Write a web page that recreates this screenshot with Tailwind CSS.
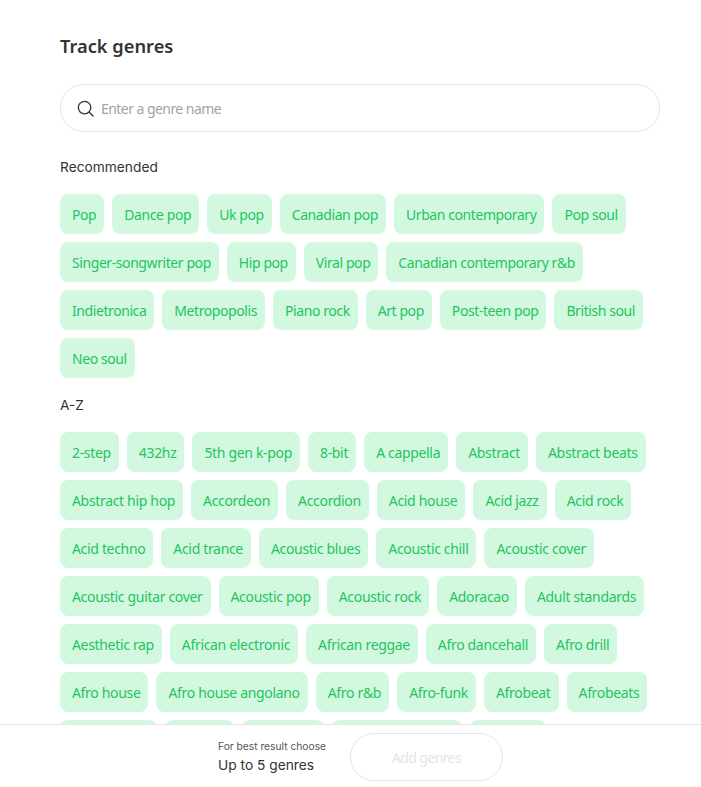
<!DOCTYPE html>
<html lang="en">
<head>
<meta charset="UTF-8">
<title>Track genres</title>
<script src="https://cdn.jsdelivr.net/npm/@tailwindcss/browser@4"></script>
</head>
<body class="bg-white font-['Noto_Sans',sans-serif]">
<div class="h-[787px] flex flex-col overflow-hidden">
  <main class="flex-1 min-h-0 overflow-hidden pl-[60px] pr-[41px] pt-[32px]">
    <h1 class="text-[18.25px] leading-[28px] font-semibold text-[#333]">Track genres</h1>
    <div class="mt-[24px] h-[48px] flex items-center rounded-full border border-[#e5e5e5] pl-[16px]">
      <svg class="w-[17px] h-[17px] text-[#333]" viewBox="0 0 18 18" fill="none" stroke="currentColor" stroke-width="1.4" stroke-linecap="round"><circle cx="8" cy="8" r="6.6"/><path d="M13 13l4 4"/></svg>
      <span class="ml-[7px] text-[14px] tracking-[-0.55px] text-[#a3a3a3]">Enter a genre name</span>
    </div>
    <h2 class="mt-[25px] text-[13.75px] leading-[20px] font-['Inter',sans-serif] text-[#333]">Recommended</h2>
    <div class="mt-[17px] flex flex-wrap gap-[8px] text-[14px] tracking-[-0.42px] text-[#22c55e]">
      <span class="h-[40px] pl-[12px] pr-[8px] flex items-center rounded-[8px] bg-[#d3f8e0]">Pop</span>
      <span class="h-[40px] pl-[12px] pr-[8px] flex items-center rounded-[8px] bg-[#d3f8e0]">Dance pop</span>
      <span class="h-[40px] pl-[12px] pr-[8px] flex items-center rounded-[8px] bg-[#d3f8e0]">Uk pop</span>
      <span class="h-[40px] pl-[12px] pr-[8px] flex items-center rounded-[8px] bg-[#d3f8e0]">Canadian pop</span>
      <span class="h-[40px] pl-[12px] pr-[8px] flex items-center rounded-[8px] bg-[#d3f8e0]">Urban contemporary</span>
      <span class="h-[40px] pl-[12px] pr-[8px] flex items-center rounded-[8px] bg-[#d3f8e0]">Pop soul</span>
      <span class="h-[40px] pl-[12px] pr-[8px] flex items-center rounded-[8px] bg-[#d3f8e0]">Singer-songwriter pop</span>
      <span class="h-[40px] pl-[12px] pr-[8px] flex items-center rounded-[8px] bg-[#d3f8e0]">Hip pop</span>
      <span class="h-[40px] pl-[12px] pr-[8px] flex items-center rounded-[8px] bg-[#d3f8e0]">Viral pop</span>
      <span class="h-[40px] pl-[12px] pr-[8px] flex items-center rounded-[8px] bg-[#d3f8e0]">Canadian contemporary r&amp;b</span>
      <span class="h-[40px] pl-[12px] pr-[8px] flex items-center rounded-[8px] bg-[#d3f8e0]">Indietronica</span>
      <span class="h-[40px] pl-[12px] pr-[8px] flex items-center rounded-[8px] bg-[#d3f8e0]">Metropopolis</span>
      <span class="h-[40px] pl-[12px] pr-[8px] flex items-center rounded-[8px] bg-[#d3f8e0]">Piano rock</span>
      <span class="h-[40px] pl-[12px] pr-[8px] flex items-center rounded-[8px] bg-[#d3f8e0]">Art pop</span>
      <span class="h-[40px] pl-[12px] pr-[8px] flex items-center rounded-[8px] bg-[#d3f8e0]">Post-teen pop</span>
      <span class="h-[40px] pl-[12px] pr-[8px] flex items-center rounded-[8px] bg-[#d3f8e0]">British soul</span>
      <span class="h-[40px] pl-[12px] pr-[8px] flex items-center rounded-[8px] bg-[#d3f8e0]">Neo soul</span>
    </div>
    <h2 class="mt-[17px] text-[13.75px] leading-[20px] font-['Inter',sans-serif] text-[#333]">A-Z</h2>
    <div class="mt-[17px] flex flex-wrap gap-[8px] text-[14px] tracking-[-0.33px] text-[#22c55e]">
      <span class="h-[40px] pl-[12px] pr-[8px] flex items-center rounded-[8px] bg-[#d3f8e0]">2-step</span>
      <span class="h-[40px] pl-[12px] pr-[8px] flex items-center rounded-[8px] bg-[#d3f8e0]">432hz</span>
      <span class="h-[40px] pl-[12px] pr-[8px] flex items-center rounded-[8px] bg-[#d3f8e0]">5th gen k-pop</span>
      <span class="h-[40px] pl-[12px] pr-[8px] flex items-center rounded-[8px] bg-[#d3f8e0]">8-bit</span>
      <span class="h-[40px] pl-[12px] pr-[8px] flex items-center rounded-[8px] bg-[#d3f8e0]">A cappella</span>
      <span class="h-[40px] pl-[12px] pr-[8px] flex items-center rounded-[8px] bg-[#d3f8e0]">Abstract</span>
      <span class="h-[40px] pl-[12px] pr-[8px] flex items-center rounded-[8px] bg-[#d3f8e0]">Abstract beats</span>
      <span class="h-[40px] pl-[12px] pr-[8px] flex items-center rounded-[8px] bg-[#d3f8e0]">Abstract hip hop</span>
      <span class="h-[40px] pl-[12px] pr-[8px] flex items-center rounded-[8px] bg-[#d3f8e0]">Accordeon</span>
      <span class="h-[40px] pl-[12px] pr-[8px] flex items-center rounded-[8px] bg-[#d3f8e0]">Accordion</span>
      <span class="h-[40px] pl-[12px] pr-[8px] flex items-center rounded-[8px] bg-[#d3f8e0]">Acid house</span>
      <span class="h-[40px] pl-[12px] pr-[8px] flex items-center rounded-[8px] bg-[#d3f8e0]">Acid jazz</span>
      <span class="h-[40px] pl-[12px] pr-[8px] flex items-center rounded-[8px] bg-[#d3f8e0]">Acid rock</span>
      <span class="h-[40px] pl-[12px] pr-[8px] flex items-center rounded-[8px] bg-[#d3f8e0]">Acid techno</span>
      <span class="h-[40px] pl-[12px] pr-[8px] flex items-center rounded-[8px] bg-[#d3f8e0]">Acid trance</span>
      <span class="h-[40px] pl-[12px] pr-[8px] flex items-center rounded-[8px] bg-[#d3f8e0]">Acoustic blues</span>
      <span class="h-[40px] pl-[12px] pr-[8px] flex items-center rounded-[8px] bg-[#d3f8e0]">Acoustic chill</span>
      <span class="h-[40px] pl-[12px] pr-[8px] flex items-center rounded-[8px] bg-[#d3f8e0]">Acoustic cover</span>
      <span class="h-[40px] pl-[12px] pr-[8px] flex items-center rounded-[8px] bg-[#d3f8e0]">Acoustic guitar cover</span>
      <span class="h-[40px] pl-[12px] pr-[8px] flex items-center rounded-[8px] bg-[#d3f8e0]">Acoustic pop</span>
      <span class="h-[40px] pl-[12px] pr-[8px] flex items-center rounded-[8px] bg-[#d3f8e0]">Acoustic rock</span>
      <span class="h-[40px] pl-[12px] pr-[8px] flex items-center rounded-[8px] bg-[#d3f8e0]">Adoracao</span>
      <span class="h-[40px] pl-[12px] pr-[8px] flex items-center rounded-[8px] bg-[#d3f8e0]">Adult standards</span>
      <span class="h-[40px] pl-[12px] pr-[8px] flex items-center rounded-[8px] bg-[#d3f8e0]">Aesthetic rap</span>
      <span class="h-[40px] pl-[12px] pr-[8px] flex items-center rounded-[8px] bg-[#d3f8e0]">African electronic</span>
      <span class="h-[40px] pl-[12px] pr-[8px] flex items-center rounded-[8px] bg-[#d3f8e0]">African reggae</span>
      <span class="h-[40px] pl-[12px] pr-[8px] flex items-center rounded-[8px] bg-[#d3f8e0]">Afro dancehall</span>
      <span class="h-[40px] pl-[12px] pr-[8px] flex items-center rounded-[8px] bg-[#d3f8e0]">Afro drill</span>
      <span class="h-[40px] pl-[12px] pr-[8px] flex items-center rounded-[8px] bg-[#d3f8e0]">Afro house</span>
      <span class="h-[40px] pl-[12px] pr-[8px] flex items-center rounded-[8px] bg-[#d3f8e0]">Afro house angolano</span>
      <span class="h-[40px] pl-[12px] pr-[8px] flex items-center rounded-[8px] bg-[#d3f8e0]">Afro r&amp;b</span>
      <span class="h-[40px] pl-[12px] pr-[8px] flex items-center rounded-[8px] bg-[#d3f8e0]">Afro-funk</span>
      <span class="h-[40px] pl-[12px] pr-[8px] flex items-center rounded-[8px] bg-[#d3f8e0]">Afrobeat</span>
      <span class="h-[40px] pl-[12px] pr-[8px] flex items-center rounded-[8px] bg-[#d3f8e0]">Afrobeats</span>
      <span class="h-[40px] w-[97px] rounded-[8px] bg-[#d3f8e0]"></span>
      <span class="h-[40px] w-[69px] rounded-[8px] bg-[#d3f8e0]"></span>
      <span class="h-[40px] w-[82px] rounded-[8px] bg-[#d3f8e0]"></span>
      <span class="h-[40px] w-[130px] rounded-[8px] bg-[#d3f8e0]"></span>
      <span class="h-[40px] w-[76px] rounded-[8px] bg-[#d3f8e0]"></span>
    </div>
  </main>
  <footer class="h-[63px] shrink-0 border-t border-[#e5e5e5] bg-white flex items-center justify-center gap-[24px] pl-[20px] pt-[2px]">
    <div class="w-[108px] font-['Inter',sans-serif] whitespace-nowrap">
      <p class="text-[10.25px] leading-[14px] text-[#555]">For best result choose</p>
      <p class="mt-[2px] text-[13.75px] leading-[20px] text-[#333]">Up to 5 genres</p>
    </div>
    <button class="w-[153px] h-[48px] rounded-full border border-[#e5e5e5] bg-white text-[14px] tracking-[-0.6px] text-[#e5e5e5]">Add genres</button>
  </footer>
</div>
</body>
</html>
